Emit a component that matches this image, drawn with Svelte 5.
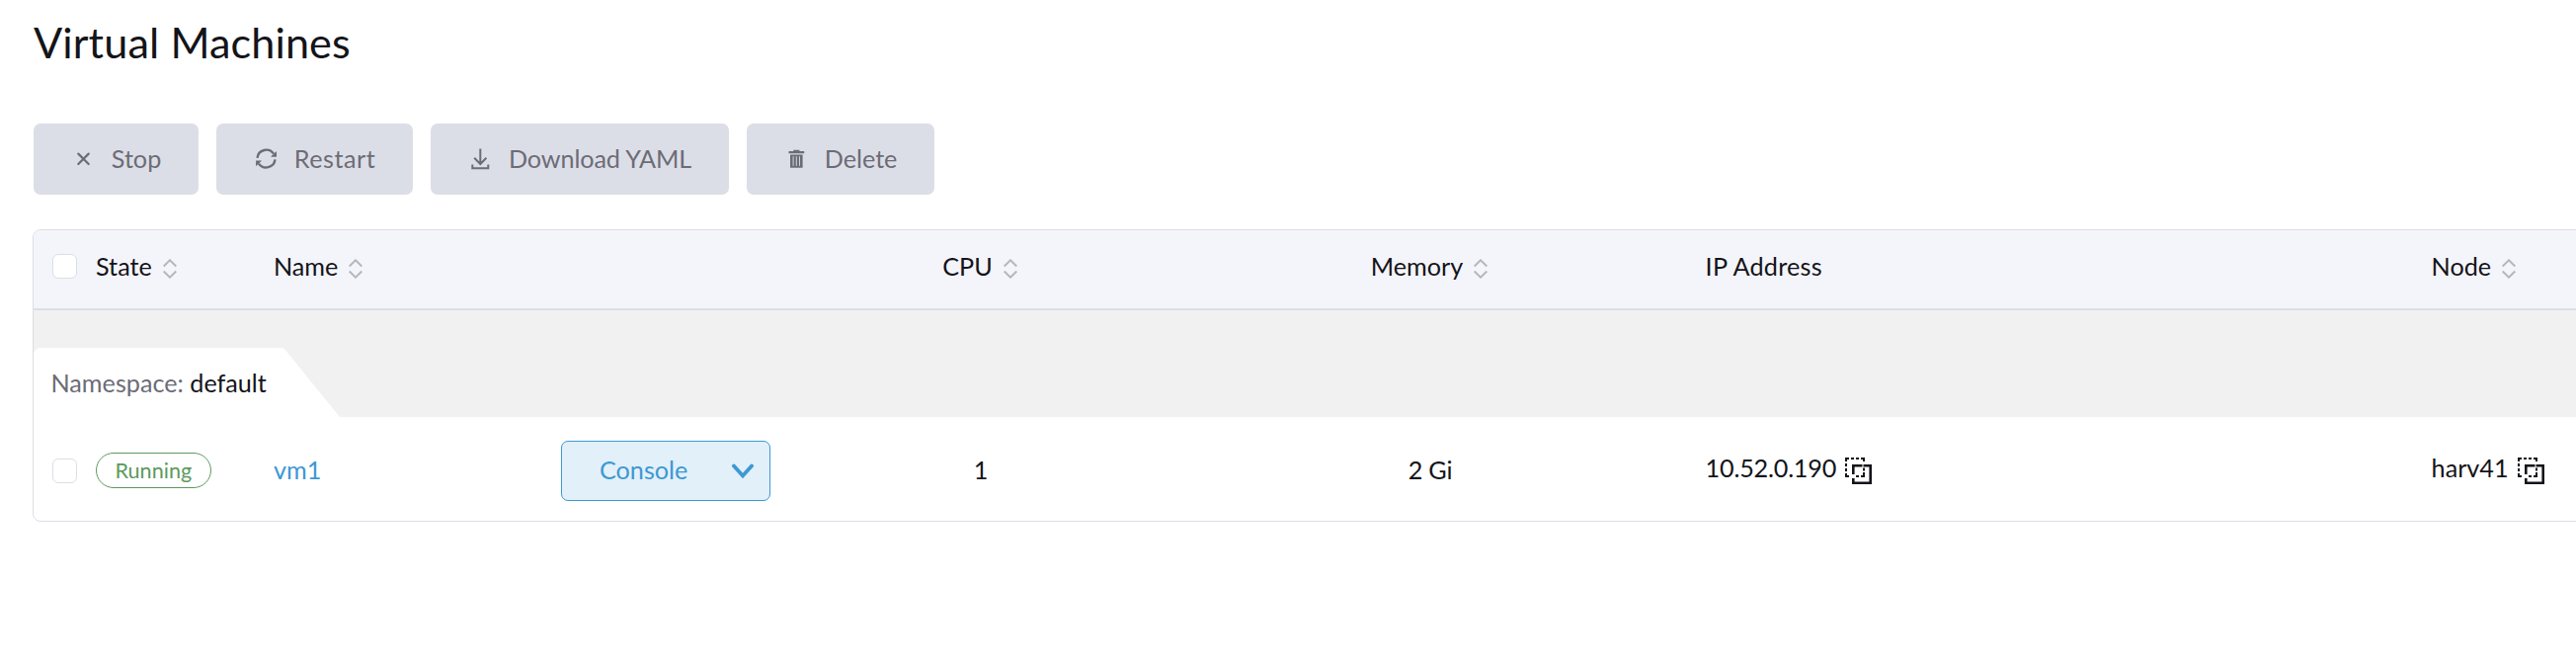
<script>
  const actions = [
    { label: 'Stop', icon: 'close' },
    { label: 'Restart', icon: 'refresh' },
    { label: 'Download YAML', icon: 'download' },
    { label: 'Delete', icon: 'trash' },
  ];

  const columns = [
    { label: 'State', sortable: true },
    { label: 'Name', sortable: true },
    { label: '', sortable: false },
    { label: 'CPU', sortable: true, center: true },
    { label: 'Memory', sortable: true, center: true },
    { label: 'IP Address', sortable: false, wide: true },
    { label: 'Node', sortable: true },
  ];

  const rows = [
    { state: 'Running', name: 'vm1', cpu: '1', memory: '2 Gi', ip: '10.52.0.190', node: 'harv41' },
  ];
</script>

{#snippet copyIcon()}
  <svg class="copy" width="28" height="28" viewBox="0 0 28 28" fill="currentColor" aria-hidden="true">
    <path d="M0 0h4v2H2v2H0zM6 0h3v2H6zM11 0h3v2h-3zM16 0h4v4h-2V2h-2zM0 6h2v3H0zM0 11h2v3H0zM0 16h2v2h2v2H0zM18 10.5h2v3h-2zM18 15h2v5h-4v-2h2zM11 18h3v2h-3z" />
    <path d="M7 7h10.5v2.6H9.6V17H7zM18.5 7H27v20H7v-6h2.6v3.4h14.8V9.6h-5.9z" />
  </svg>
{/snippet}

<main>
  <h1>Virtual Machines</h1>

  <div class="actions">
    {#each actions as action}
      <button class="action {action.icon}" disabled>
        <svg width="25" height="25" viewBox="0 0 25 25" fill="none" stroke="currentColor" aria-hidden="true">
          {#if action.icon === 'close'}
            <path d="M7.3 6.6 17.7 17M17.7 6.6 7.3 17" stroke-width="2.2" stroke-linecap="round" />
          {:else if action.icon === 'refresh'}
            <path d="M3.5 10.8A9.1 9.1 0 0 1 20 6.6M21.5 12.4A9.1 9.1 0 0 1 5 16.6" stroke-width="2.4" />
            <path d="M23 4V9.8H17ZM2.1 19.3V13.6H8.1Z" fill="currentColor" stroke="none" />
          {:else if action.icon === 'download'}
            <path d="M12.3 1.5V17M6.2 10.8 12.3 17 18.4 10.8M4.3 17.5V21.2H20.3V17.5" stroke-width="2" />
          {:else}
            <path d="M4.5 4H9.3V2.7H15.4V4H20.2V6.3H4.5ZM6 7.5H18.6V20.7H6Z" fill="currentColor" stroke="none" />
            <path d="M9.1 9.2V18.9M12.3 9.2V18.9M15.5 9.2V18.9" stroke="#dcdee7" stroke-width="0.9" />
          {/if}
        </svg>
        <span>{action.label}</span>
      </button>
    {/each}
  </div>

  <div class="table">
    <div class="row head">
      <div class="cell"><span class="check"></span></div>
      {#each columns as col}
        <div class="cell" class:center={col.center}>
          <span class="label" class:wide={col.wide}>{col.label}</span>
          {#if col.sortable}
            <svg class="sort" width="14" height="20" viewBox="0 0 14 20" fill="none" stroke="#b6b6bd" stroke-width="2" aria-hidden="true">
              <path d="M.7 7.5 7 1.3 13.3 7.5M.7 12.5 7 18.7 13.3 12.5" />
            </svg>
          {/if}
        </div>
      {/each}
    </div>

    <div class="group">
      <div class="tab"><span>Namespace:</span> default</div>
      <svg class="slope" width="60" height="70" viewBox="0 0 60 70" aria-hidden="true">
        <path d="M0 0C3 0 4.5 1.5 6 3.5L60 70H0Z" fill="#fff" />
      </svg>
    </div>

    {#each rows as row}
      <div class="row body">
        <div class="cell"><span class="check"></span></div>
        <div class="cell"><span class="badge">{row.state}</span></div>
        <div class="cell text link">{row.name}</div>
        <div class="cell">
          <button class="console">
            <span>Console</span>
            <svg width="22" height="16" viewBox="0 0 22 16" fill="none" stroke="currentColor" stroke-width="3.8" stroke-linecap="round" aria-hidden="true">
              <path d="M2 2.5 11 12.5 20 2.5" />
            </svg>
          </button>
        </div>
        <div class="cell text center">{row.cpu}</div>
        <div class="cell text center tight">{row.memory}</div>
        <div class="cell copyable tight">{row.ip}{@render copyIcon()}</div>
        <div class="cell copyable">{row.node}{@render copyIcon()}</div>
      </div>
    {/each}
  </div>
</main>

<style>
  :global(body) {
    background: #fff;
    overflow: hidden;
  }
  main {
    box-sizing: border-box;
    height: 676px;
    padding-left: 33px;
    overflow: hidden;
    font: 25.2px/30px Lato, sans-serif;
    color: #141419;
  }
  h1 {
    margin: 0;
    padding: 16px 0 57px 1px;
    font-size: 43.2px;
    line-height: 52px;
    font-weight: 400;
    letter-spacing: 0.1px;
  }
  .actions {
    display: flex;
    gap: 18px;
    padding-left: 1px;
    margin-bottom: 35px;
  }
  button {
    font: inherit;
    box-sizing: border-box;
    border-radius: 7px;
    display: flex;
    align-items: center;
  }
  .action {
    height: 72px;
    padding: 0 37.8px;
    gap: 16px;
    border: 0;
    background: #dcdee7;
    color: #6c6c76;
  }
  .action span {
    padding-bottom: 2px;
  }
  .refresh span {
    letter-spacing: 0.5px;
  }
  .download span {
    letter-spacing: -0.1px;
  }
  .table {
    width: 2700px;
    border: 1px solid #dcdee7;
    border-radius: 8px;
    overflow: hidden;
  }
  .row {
    display: grid;
    grid-template-columns: 44px 180px 291px 248px 354px 556px 735px 220px;
    padding-left: 19px;
  }
  .head {
    height: 73px;
    padding-bottom: 6px;
    background: #f4f5fa;
    border-bottom: 2px solid #dcdee7;
  }
  .head .center {
    padding-right: 2px;
  }
  .label {
    padding-bottom: 1px;
  }
  .wide {
    letter-spacing: 0.25px;
  }
  .tight {
    letter-spacing: -0.2px;
  }
  .cell {
    display: flex;
    align-items: center;
    white-space: nowrap;
  }
  .cell:nth-child(n + 7) {
    padding-left: 0.6px;
  }
  .center {
    justify-content: center;
  }
  .sort {
    margin: 5px 0 0 11px;
  }
  .check {
    box-sizing: border-box;
    width: 25px;
    height: 25px;
    border: 1px solid #dcdee7;
    border-radius: 6px;
    background: #fff;
  }
  .group {
    display: flex;
    height: 70px;
    padding-top: 38px;
    background: #f1f1f1;
  }
  .tab {
    box-sizing: border-box;
    width: 250px;
    height: 70px;
    padding: 20px 0 0 17.5px;
    border-radius: 7px 0 0 0;
    background: #fff;
    white-space: nowrap;
  }
  .tab span {
    color: #6c6c76;
  }
  .body {
    height: 102px;
    padding-top: 3px;
  }
  .body .check,
  .console {
    margin-top: 1px;
  }
  .text {
    padding-bottom: 2px;
  }
  .link {
    color: #3d98d3;
  }
  .badge {
    box-sizing: border-box;
    height: 36px;
    padding: 0 18.5px;
    border: 1px solid #5d995d;
    border-radius: 18px;
    font-size: 21.6px;
    line-height: 34px;
    color: #5d995d;
  }
  .console {
    width: 212px;
    height: 61px;
    padding: 0 16px 0 38px;
    justify-content: space-between;
    border: 1px solid #3d98d3;
    background: #e2f0f9;
    color: #3d98d3;
  }
  .console span {
    padding-bottom: 3px;
  }
  .copyable {
    padding-bottom: 6px;
  }
  .copy {
    margin: 8px 0 0 9px;
  }
</style>
